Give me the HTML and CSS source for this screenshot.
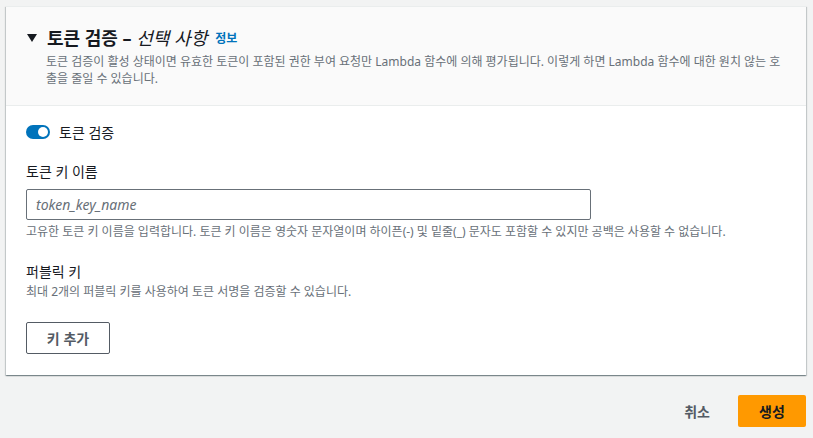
FILE: index.html
```html
<!DOCTYPE html>
<html lang="ko">
<head>
<meta charset="utf-8">
<link rel="stylesheet" href="styles.css">
</head>
<body>
<div class="page">
  <section class="card">
    <header class="card-header">
      <h2 class="title">
        <span class="caret"></span>
        <span class="title-text">토큰 검증 – <i>선택 사항</i></span>
        <a class="info">정보</a>
      </h2>
      <p class="desc">토큰 검증이 활성 상태이면 유효한 토큰이 포함된 권한 부여 요청만 Lambda 함수에 의해 평가됩니다. 이렇게 하면 Lambda 함수에 대한 원치 않는 호출을 줄일 수 있습니다.</p>
    </header>
    <div class="card-body">
      <label class="toggle-row">
        <span class="toggle"><span class="knob"></span></span>
        <span class="toggle-label">토큰 검증</span>
      </label>
      <div class="field">
        <div class="label">토큰 키 이름</div>
        <div class="input"><span class="placeholder">token_key_name</span></div>
        <div class="hint">고유한 토큰 키 이름을 입력합니다. 토큰 키 이름은 영숫자 문자열이며 하이픈(-) 및 밑줄(_) 문자도 포함할 수 있지만 공백은 사용할 수 없습니다.</div>
      </div>
      <div class="field field-keys">
        <div class="label">퍼블릭 키</div>
        <div class="hint hint-tight">최대 2개의 퍼블릭 키를 사용하여 토큰 서명을 검증할 수 있습니다.</div>
        <button class="btn-normal">키 추가</button>
      </div>
    </div>
  </section>
  <footer class="actions">
    <button class="btn-link">취소</button>
    <button class="btn-primary">생성</button>
  </footer>
</div>
</body>
</html>
```
FILE: styles.css
```css
* { box-sizing: border-box; }
html, body { margin: 0; padding: 0; }
body {
  background: #f2f3f3;
  font-family: "Noto Sans", "Noto Sans CJK KR", sans-serif;
  color: #16191f;
  width: 813px;
  height: 438px;
  overflow: hidden;
}
.page { padding: 6px 7px 0 6px; }
.card {
  background: #ffffff;
  box-shadow: 0 1px 1px 0 rgba(0,28,36,0.3), 1px 1px 1px 0 rgba(0,28,36,0.15), -1px 1px 1px 0 rgba(0,28,36,0.15);
  border-top: 1px solid #eaeded;
}
.card-header {
  background: #fafafa;
  border-bottom: 1px solid #eaeded;
  padding: 18px 20px 18px 20px;
}
.title {
  margin: 0;
  display: flex;
  align-items: center;
  font-size: 18px;
  line-height: 24px;
  font-weight: 700;
  color: #16191f;
}
.caret {
  width: 0; height: 0;
  border-left: 5px solid transparent;
  border-right: 5px solid transparent;
  border-top: 8px solid #16191f;
  margin: 0 10px 0 1px;
}
.title-text i { font-weight: 400; }
.info {
  font-size: 12px;
  font-weight: 700;
  color: #0073bb;
  margin-left: 8px;
  margin-top: 2px;
}
.desc {
  margin: 2px 0 0 20px;
  font-size: 12px;
  line-height: 17px;
  color: #687078;
}
.card-body { padding: 16px 20px 21px 20px; }
.toggle-row { display: flex; align-items: center; height: 20px; }
.toggle {
  width: 24px; height: 14px;
  border-radius: 8px;
  background: #0073bb;
  position: relative;
  display: inline-block;
}
.knob {
  position: absolute;
  width: 10px; height: 10px;
  border-radius: 50%;
  background: #fff;
  top: 2px; right: 2px;
}
.toggle-label { margin-left: 9px; font-size: 14px; color: #16191f; }
.field { margin-top: 19px; }
.label { font-size: 14px; line-height: 22px; color: #16191f; }
.input {
  margin-top: 6px;
  width: 565px;
  height: 31px;
  border: 1px solid #687078;
  border-radius: 2px;
  background: #fff;
  padding: 0 9px;
  display: flex;
  align-items: center;
}
.placeholder { font-style: italic; font-size: 14px; color: #687078; }
.hint { margin-top: 3px; font-size: 12px; line-height: 17px; color: #687078; }
.field-keys { margin-top: 21px; }
.hint-tight { margin-top: 0; }
.btn-normal {
  margin-top: 22px;
  width: 84px;
  height: 32px;
  border: 1px solid #545b64;
  border-radius: 2px;
  background: #fff;
  font-family: inherit;
  font-size: 14px;
  font-weight: 700;
  color: #545b64;
}
.actions {
  display: flex;
  justify-content: flex-end;
  align-items: center;
  gap: 24px;
  padding-top: 20px;
}
.btn-link {
  border: 0; background: none;
  font-family: inherit;
  font-size: 14px; font-weight: 700;
  color: #545b64;
  padding: 0 4px;
}
.btn-primary {
  width: 68px; height: 32px;
  border: 0; border-radius: 2px;
  background: #ff9900;
  font-family: inherit;
  font-size: 14px; font-weight: 700;
  color: #16191f;
}
```
